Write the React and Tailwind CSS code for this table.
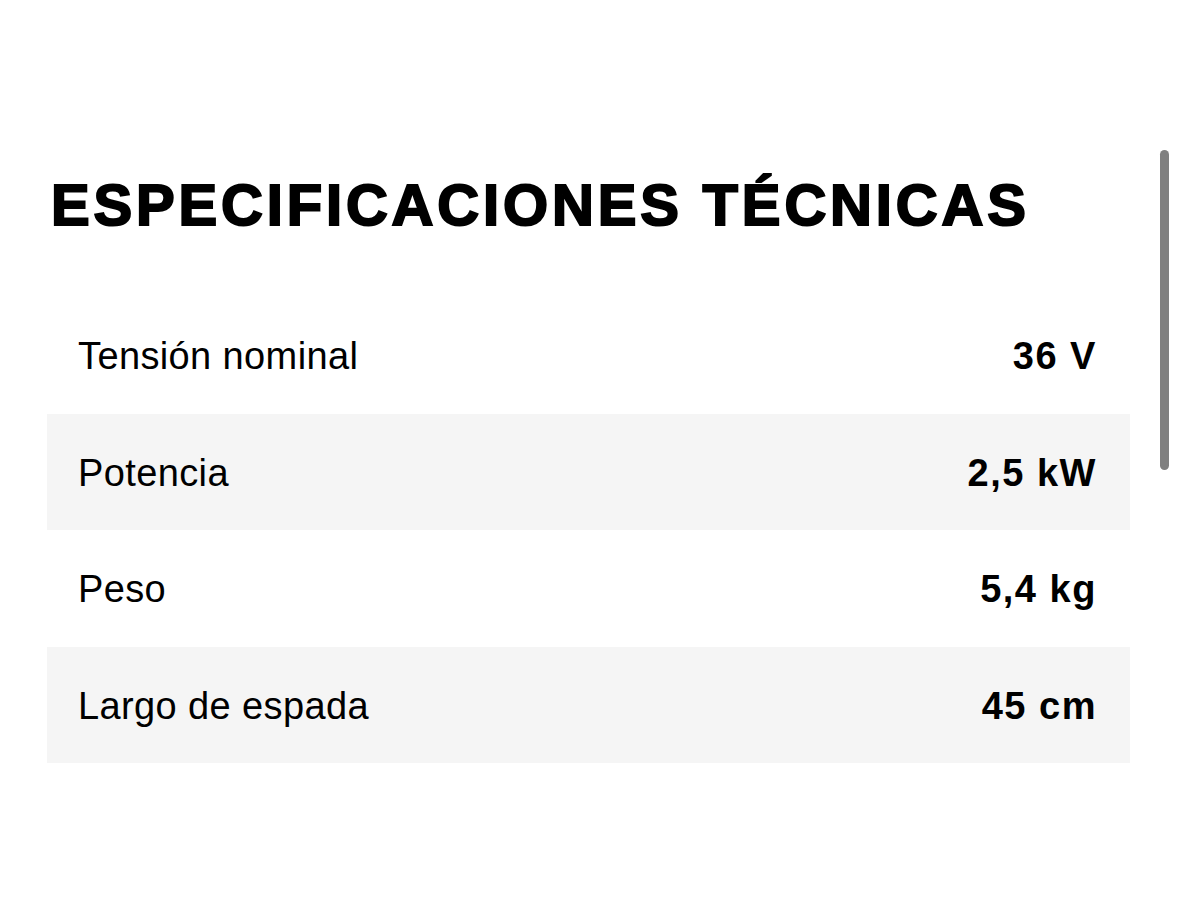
const specs = [
  { label: 'Tensión nominal', value: '36 V' },
  { label: 'Potencia', value: '2,5 kW' },
  { label: 'Peso', value: '5,4 kg' },
  { label: 'Largo de espada', value: '45 cm' },
];

const App = () => {
  return (
    <div className="relative w-[1178px] h-[906px] bg-white overflow-hidden" style={{ fontFamily: '"Liberation Sans", Arial, sans-serif' }}>
      {/* Scrollbar */}
      <div className="absolute left-[1160px] top-[150px] w-[9px] h-[320px] rounded-full bg-[#808080]" />

      <div className="pl-[47px] pr-[48px] pt-[170px]">
        <h1 className="pl-[4px] text-[58px] leading-[70px] font-bold tracking-[0.066em] text-black uppercase whitespace-nowrap [-webkit-text-stroke:2px_black]">
          Especificaciones técnicas
        </h1>

        <div className="mt-[57px]">
          {specs.map((row, i) => (
            <div
              key={row.label}
              className={`flex items-center justify-between h-[116.5px] pt-[3px] pl-[31px] pr-[33px] ${
                i % 2 === 1 ? 'bg-[#f5f5f5]' : 'bg-white'
              }`}
            >
              <span className="text-[38px] tracking-[0.01em] text-black">{row.label}</span>
              <span className="text-[38px] font-bold tracking-[0.04em] text-black">{row.value}</span>
            </div>
          ))}
        </div>
      </div>
    </div>
  );
};

export default App;
